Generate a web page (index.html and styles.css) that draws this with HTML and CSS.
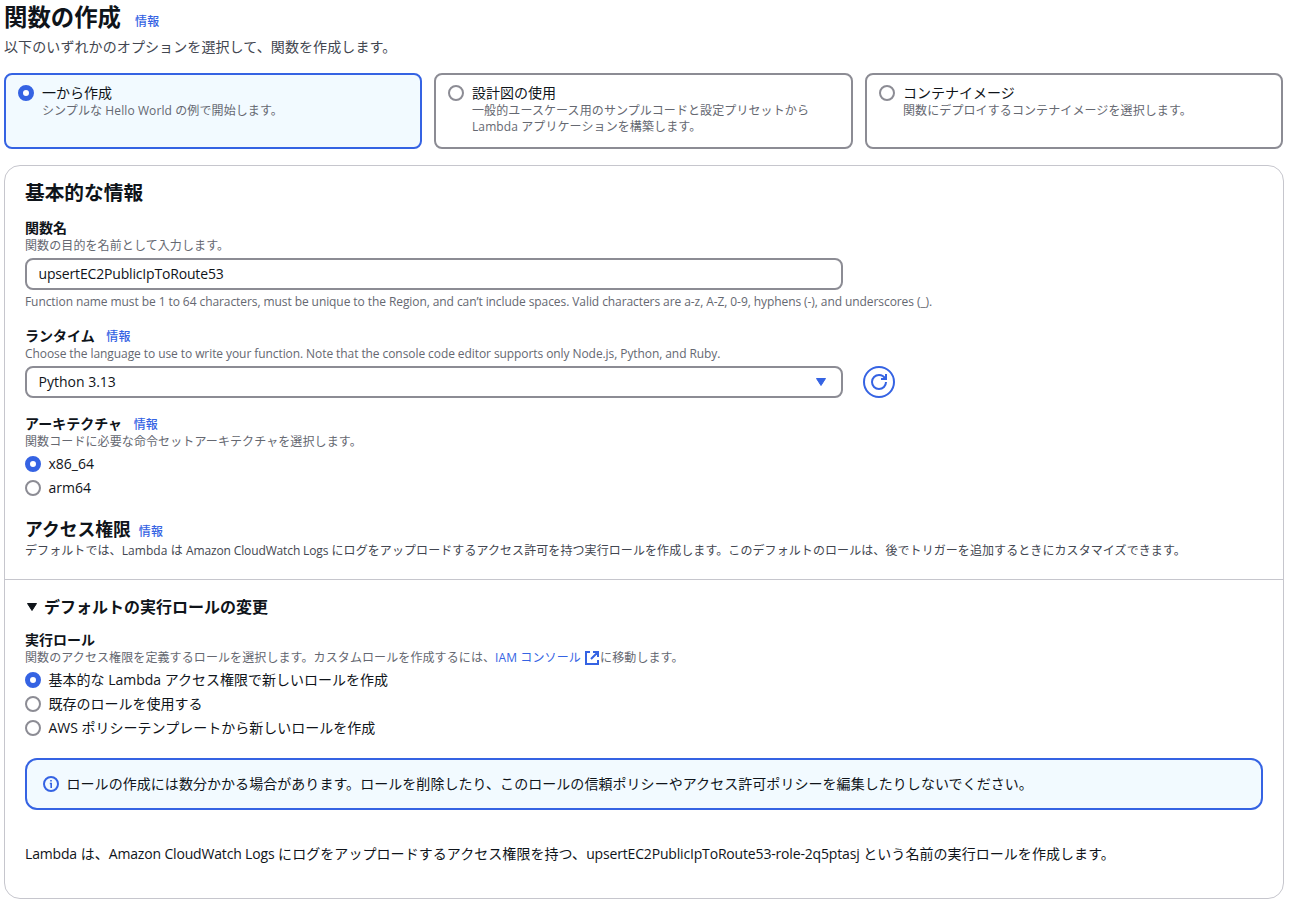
FILE: index.html
```html
<!DOCTYPE html>
<html lang="ja">
<head>
    <meta charset="UTF-8">
    <meta name="viewport" content="width=device-width, initial-scale=1.0">
    <title>関数の作成</title>
    <link rel="stylesheet" href="styles.css">
</head>
<body>
<main class="page">
    <header class="page-header">
        <h1>関数の作成</h1>
        <a class="info" href="#">情報</a>
    </header>
    <p class="page-description">以下のいずれかのオプションを選択して、関数を作成します。</p>

    <div class="tiles">
        <label class="tile selected">
            <input type="radio" name="method" class="radio" checked>
            <span class="tile-text">
                <span class="tile-title">一から作成</span>
                <span class="description">シンプルな Hello World の例で開始します。</span>
            </span>
        </label>
        <label class="tile">
            <input type="radio" name="method" class="radio">
            <span class="tile-text">
                <span class="tile-title">設計図の使用</span>
                <span class="description">一般的ユースケース用のサンプルコードと設定プリセットから<br>Lambda アプリケーションを構築します。</span>
            </span>
        </label>
        <label class="tile">
            <input type="radio" name="method" class="radio">
            <span class="tile-text">
                <span class="tile-title">コンテナイメージ</span>
                <span class="description">関数にデプロイするコンテナイメージを選択します。</span>
            </span>
        </label>
    </div>

    <div class="panel">
        <section class="basic">
            <h2>基本的な情報</h2>

            <div class="field">
                <label class="field-label" for="functionName">関数名</label>
                <p class="description">関数の目的を名前として入力します。</p>
                <input type="text" id="functionName" class="control" value="upsertEC2PublicIpToRoute53">
                <p class="description hint latin">Function name must be 1 to 64 characters, must be unique to the Region, and can’t include spaces. Valid characters are a-z, A-Z, 0-9, hyphens (-), and underscores (_).</p>
            </div>

            <div class="field">
                <div class="field-label">ランタイム <a class="info" href="#">情報</a></div>
                <p class="description latin">Choose the language to use to write your function. Note that the console code editor supports only Node.js, Python, and Ruby.</p>
                <div class="control-row">
                    <div class="control select">
                        <span>Python 3.13</span>
                        <svg class="caret" viewBox="0 0 16 16"><path d="M3.5 4.5h9L8 11.5z"/></svg>
                    </div>
                    <button type="button" class="refresh" aria-label="更新">
                        <svg viewBox="0 0 16 16"><path d="M15 8c0 3.87-3.13 7-7 7s-7-3.13-7-7 3.13-7 7-7c2.79 0 5.2 1.63 6.33 4"/><path d="M10 5h5V0"/></svg>
                    </button>
                </div>
            </div>

            <div class="field">
                <div class="field-label">アーキテクチャ <a class="info" href="#">情報</a></div>
                <p class="description">関数コードに必要な命令セットアーキテクチャを選択します。</p>
                <div class="radios">
                    <label><input type="radio" name="arch" class="radio" checked>x86_64</label>
                    <label><input type="radio" name="arch" class="radio">arm64</label>
                </div>
            </div>

            <div class="access-header">
                <h3>アクセス権限</h3>
                <a class="info" href="#">情報</a>
            </div>
            <p class="access-description">デフォルトでは、Lambda は <span class="latin">Amazon CloudWatch Logs</span> にログをアップロードするアクセス許可を持つ実行ロールを作成します。このデフォルトのロールは、後でトリガーを追加するときにカスタマイズできます。</p>
        </section>

        <section class="role">
            <h4>
                <svg class="caret" viewBox="0 0 16 16"><path d="M3.5 4.5h9L8 11.5z"/></svg>
                デフォルトの実行ロールの変更
            </h4>

            <div class="field">
                <div class="field-label">実行ロール</div>
                <p class="description">関数のアクセス権限を定義するロールを選択します。カスタムロールを作成するには、<a class="link" href="#">IAM コンソール <svg class="external" viewBox="0 0 16 16"><path d="M6 2H2v12h12v-4M9 2h5v5M7 9l7-7"/></svg></a>に移動します。</p>
                <div class="radios">
                    <label><input type="radio" name="role" class="radio" checked>基本的な Lambda アクセス権限で新しいロールを作成</label>
                    <label><input type="radio" name="role" class="radio">既存のロールを使用する</label>
                    <label><input type="radio" name="role" class="radio">AWS ポリシーテンプレートから新しいロールを作成</label>
                </div>
            </div>

            <div class="alert">
                <svg viewBox="0 0 16 16"><circle cx="8" cy="8" r="7"/><path class="mark" d="M8 4v1.6M6.8 7.5H8.2V12"/></svg>
                <span>ロールの作成には数分かかる場合があります。ロールを削除したり、このロールの信頼ポリシーやアクセス許可ポリシーを編集したりしないでください。</span>
            </div>

            <p class="summary"><span class="latin">Lambda</span> は、<span class="latin">Amazon CloudWatch Logs</span> にログをアップロードするアクセス権限を持つ、<span class="latin">upsertEC2PublicIpToRoute53-role-2q5ptasj</span> という名前の実行ロールを作成します。</p>
        </section>
    </div>
</main>
</body>
</html>
```
FILE: styles.css
```css
* {
    box-sizing: border-box;
}

body {
    margin: 0;
    background: #fff;
    color: #0f141a;
    font-family: "Open Sans", "Noto Sans CJK JP", sans-serif;
    font-size: 14px;
    line-height: 20px;
}

h1, h2, h3, h4, p {
    margin: 0;
}

a {
    color: #3563e3;
    text-decoration: none;
}

.page {
    width: 1284px;
    padding-left: 4px;
}

.page-header {
    display: flex;
    align-items: baseline;
    gap: 14px;
    height: 37px;
    padding-top: 2px;
}

h1 {
    font-size: 23.4px;
    line-height: 30px;
}

.info {
    font-size: 12px;
    font-weight: 500;
    line-height: 1;
    letter-spacing: 0.2px;
}

.page-description {
    color: #424650;
    line-height: 20px;
    letter-spacing: 0.1px;
}

/* Opciones de creación */
.tiles {
    display: grid;
    grid-template-columns: 418px 419px 418px;
    gap: 12px;
    margin-top: 16px;
}

.tile {
    display: flex;
    gap: 8px;
    height: 76px;
    padding: 8px 12px;
    border: 2px solid #8c8c94;
    border-radius: 8px;
}

.tile.selected {
    background: #f2faff;
    border-color: #3563e3;
}

.tile-title {
    display: block;
    line-height: 20px;
}

.description {
    display: block;
    color: #656871;
    font-size: 12px;
    line-height: 16px;
    letter-spacing: 0.1px;
}

.description.latin {
    letter-spacing: -0.08px;
}

.radio {
    appearance: none;
    flex: none;
    width: 16px;
    height: 16px;
    margin: 2px 0 0;
    border: 2px solid #8c8c94;
    border-radius: 50%;
    background: #fff;
}

.radio:checked {
    border: 5px solid #3563e3;
}

/* Panel principal */
.panel {
    height: 734px;
    margin-top: 16px;
    border: 1px solid #c6c6cd;
    border-radius: 16px;
}

.basic {
    height: 414px;
    padding: 15px 20px 0;
    border-bottom: 1px solid #c6c6cd;
}

h2 {
    margin-bottom: 13px;
    font-size: 19.7px;
    line-height: 24px;
}

.field {
    margin-bottom: 16px;
}

.field-label {
    display: block;
    height: 20px;
    font-weight: 700;
    line-height: 20px;
}

.field-label .info {
    margin-left: 8px;
}

.control {
    display: block;
    width: 818px;
    height: 32px;
    margin-top: 4px;
    padding: 3px 12px 5px 11.5px;
    border: 2px solid #8c8c94;
    border-radius: 8px;
    background: #fff;
    color: #0f141a;
    font: inherit;
    letter-spacing: -0.17px;
}

.hint {
    margin-top: 4px;
}

.control-row {
    display: flex;
    gap: 20px;
    margin-top: 4px;
}

.select {
    display: flex;
    align-items: center;
    justify-content: space-between;
    margin-top: 0;
    padding: 4px 12px 4px 11.5px;
    letter-spacing: 0;
}

.caret {
    width: 16px;
    height: 16px;
    fill: #3563e3;
    stroke: #3563e3;
    stroke-linejoin: round;
}

.refresh {
    display: flex;
    align-items: center;
    justify-content: center;
    width: 32px;
    height: 32px;
    padding: 0;
    border: 2px solid #3563e3;
    border-radius: 50%;
    background: #fff;
}

.refresh svg {
    width: 16px;
    height: 16px;
    fill: none;
    stroke: #3563e3;
    stroke-width: 2;
}

.radios {
    display: flex;
    flex-direction: column;
    gap: 4px;
    margin-top: 4px;
}

.radios label {
    display: flex;
    gap: 7.5px;
    height: 20px;
}

.access-header {
    display: flex;
    align-items: baseline;
    gap: 8px;
    margin-top: 20px;
    height: 25px;
}

h3 {
    font-size: 17.8px;
    line-height: 22px;
}

.access-description {
    color: #424650;
    font-size: 12px;
    line-height: 16px;
    letter-spacing: 0.08px;
    white-space: nowrap;
}

.latin {
    letter-spacing: -0.13px;
}

.role {
    padding: 17px 20px 0;
}

h4 {
    display: flex;
    align-items: center;
    gap: 4px;
    margin-bottom: 13px;
    font-size: 16px;
    line-height: 20px;
    margin-left: -1px;
}

h4 .caret {
    fill: #0f141a;
    stroke: #0f141a;
}

.external {
    width: 16px;
    height: 16px;
    margin-top: -4px;
    fill: none;
    stroke: #3563e3;
    stroke-width: 2;
    vertical-align: -4px;
}

.alert {
    display: flex;
    align-items: center;
    gap: 7.5px;
    height: 52px;
    margin-top: 20px;
    padding: 0 16px;
    border: 2px solid #3563e3;
    border-radius: 12px;
    background: #f2faff;
    letter-spacing: 0.05px;
}

.alert svg {
    width: 16px;
    height: 16px;
    fill: none;
    stroke: #3563e3;
    stroke-width: 2;
}

.alert .mark {
    stroke-width: 1.6;
}

.summary {
    margin-top: 34px;
    letter-spacing: 0.06px;
}

.summary .latin {
    letter-spacing: -0.17px;
}
```
